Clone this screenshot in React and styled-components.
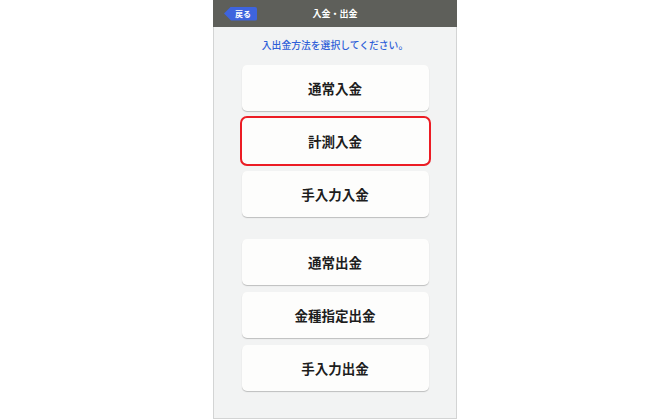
import React from 'react';
import styled, { createGlobalStyle } from 'styled-components';

const GlobalStyle = createGlobalStyle`
  html, body {
    margin: 0;
    padding: 0;
    background: #ffffff;
  }
  body {
    font-family: "Noto Sans CJK JP", "Noto Sans", sans-serif;
  }
`;

const Page = styled.div`
  width: 670px;
  height: 419px;
  display: flex;
  justify-content: center;
  overflow: hidden;
`;

const Phone = styled.div`
  width: 244px;
  height: 419px;
  box-sizing: border-box;
  border: 1px solid #d3d4d4;
  border-top: none;
  background: #f2f3f3;
  display: flex;
  flex-direction: column;
`;

const Header = styled.div`
  height: 27px;
  margin: 0 -1px;
  background: #5e5f5a;
  display: grid;
  grid-template-columns: 1fr auto 1fr;
  align-items: center;
`;

const BackButton = styled.div`
  justify-self: start;
  margin-left: 11px;
  width: 33px;
  height: 14px;
  box-sizing: border-box;
  padding-left: 11px;
  background: #3e64de;
  clip-path: polygon(0 50%, 7px 0, 100% 0, 100% 100%, 7px 100%);
  border-radius: 0 2px 2px 0;
  color: #ffffff;
  font-size: 8px;
  font-weight: 700;
  line-height: 14px;
`;

const Title = styled.div`
  color: #ffffff;
  font-size: 9px;
  font-weight: 700;
`;

const Lead = styled.p`
  margin: 12px 0 0;
  text-align: center;
  color: #2f5fd8;
  font-size: 9.8px;
  font-weight: 500;
  line-height: 12px;
`;

const Group = styled.div`
  display: flex;
  flex-direction: column;
  align-items: center;
  gap: 7px;
  margin-top: ${(p) => p.$top}px;
`;

const Choice = styled.button`
  width: 187px;
  height: 46px;
  border: none;
  border-radius: 5px;
  background: #fdfdfc;
  box-shadow: 0 1px 1px rgba(0, 0, 0, 0.22);
  outline: ${(p) => (p.$active ? '2px solid #ec1c24' : 'none')};
  outline-offset: 0;
  color: #1e1e1e;
  font-family: "Noto Sans CJK JP", sans-serif;
  font-size: 13.5px;
  font-weight: 700;
  padding: 0;
  cursor: pointer;
`;

const deposits = ['通常入金', '計測入金', '手入力入金'];
const withdrawals = ['通常出金', '金種指定出金', '手入力出金'];

export default function App() {
  return (
    <Page>
      <GlobalStyle />
      <Phone>
        <Header>
          <BackButton>戻る</BackButton>
          <Title>入金・出金</Title>
          <span />
        </Header>
        <Lead>入出金方法を選択してください。</Lead>
        <Group $top={14}>
          {deposits.map((label, i) => (
            <Choice key={label} $active={i === 1}>{label}</Choice>
          ))}
        </Group>
        <Group $top={22}>
          {withdrawals.map((label) => (
            <Choice key={label}>{label}</Choice>
          ))}
        </Group>
      </Phone>
    </Page>
  );
}
